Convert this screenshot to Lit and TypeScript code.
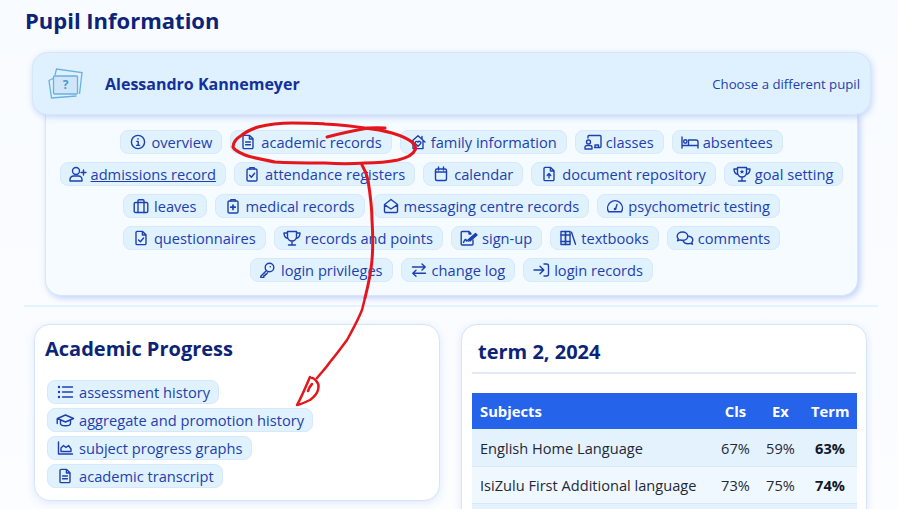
import { LitElement, html, css, svg } from "lit";
import { customElement } from "lit/decorators.js";

const I: Record<string, any> = {
  info: svg`<circle cx="8" cy="8" r="6.6"/><path d="M6.8 7.4H8.2V11.2M6.6 11.4H9.6"/><circle cx="8" cy="4.9" r=".8" fill="currentColor" stroke="none"/>`,
  doc: svg`<path d="M3 2.6a1.2 1.2 0 0 1 1.2-1.2H9.6L13 4.800v8.600a1.200 1.200 0 0 1-1.200 1.200H4.200A1.200 1.200 0 0 1 3 13.400ZM9.400 1.400V5H13M5.600 8H10.400M5.600 10.800H10.400"/>`,
  house: svg`<path d="M1 8 8 1.800 15 8M3 6.400V14.600H13V6.400M12 2.500V5.200"/><path d="M8 12.200 5.300 9.600a1.500 1.500 0 0 1 2.700-1.400 1.500 1.500 0 0 1 2.700 1.400Z"/>`,
  classes: svg`<circle cx="4.500" cy="8" r="2"/><path d="M1 15V13.500a2 2 0 0 1 2-2H6a2 2 0 0 1 2 2V15ZM4 4V2.500a1 1 0 0 1 1-1H16a1 1 0 0 1 1 1V12.500a1 1 0 0 1-1 1H10.500M11 13.500V11h3.500v2.500"/>`,
  bed: svg`<path d="M1 3V14M1 11.500H17M17 14V8a2 2 0 0 0-2-2H7.500V11"/><circle cx="4.300" cy="7.500" r="1.700"/>`,
  userplus: svg`<circle cx="7" cy="5" r="3.500"/><path d="M1 15v-1.500A3.500 3.500 0 0 1 4.500 10h5a3.500 3.500 0 0 1 3.500 3.500V15ZM14.500 4V9M12 6.500H17"/>`,
  clipcheck: svg`<rect x="3" y="3" width="10" height="12" rx="1.300"/><path d="M5.800 3V1.600H10.200V3M5.600 9.300 7.400 11.200 10.600 7.200"/>`,
  cal: svg`<rect x="2.500" y="3" width="11" height="11.500" rx="1.500"/><path d="M5.500 1V4M10.500 1V4M2.500 6H13.500"/>`,
  docup: svg`<path d="M3 2.600a1.200 1.200 0 0 1 1.200-1.200H9.600L13 4.800v8.600a1.200 1.200 0 0 1-1.200 1.200H4.200A1.200 1.200 0 0 1 3 13.400ZM9.400 1.400V5H13M8 12V7.600M6.200 9.400 8 7.600 9.800 9.400"/>`,
  trophystar: svg`<path d="M4.500 1.500H13.500V6.500a4.500 4.500 0 0 1-9 0ZM4.500 3H1C1 6.500 2.500 8 5 8.500M13.500 3H17C17 6.500 15.500 8 13 8.500M9 11V14.500M5.500 15H12.500"/><path d="M9 3.400 9.700 5H11.300L10 6.100 10.500 7.700 9 6.700 7.500 7.700 8 6.100 6.700 5H8.300Z" fill="currentColor" stroke="none"/>`,
  trophy: svg`<path d="M4.500 1.500H13.500V6.500a4.500 4.500 0 0 1-9 0ZM4.500 3H1C1 6.500 2.500 8 5 8.500M13.500 3H17C17 6.500 15.500 8 13 8.500M9 11V14.500M5.500 15H12.500"/>`,
  briefcase: svg`<rect x="1.200" y="4.500" width="13.600" height="10" rx="1.300"/><path d="M5 14.500V2.800a1 1 0 0 1 1-1H10a1 1 0 0 1 1 1V14.500"/>`,
  clipplus: svg`<rect x="3" y="3" width="10" height="12" rx="1.300"/><path d="M5.800 3V1.600H10.200V3" /><path d="M8 7V11.400M5.800 9.200H10.200" stroke-width="1.700"/>`,
  envopen: svg`<path d="M1.500 6.500 8 1.500 14.500 6.500V13.300a1.200 1.200 0 0 1-1.200 1.200H2.700a1.200 1.200 0 0 1-1.200-1.200ZM1.800 6.800 8 11 14.200 6.800"/>`,
  gauge: svg`<path d="M1.600 13.800a7.400 7.400 0 1 1 12.800 0ZM8.600 11 10 6.500"/><circle cx="8" cy="11" r="1.300" fill="currentColor" stroke="none"/>`,
  doccheck: svg`<path d="M3 2.600a1.200 1.200 0 0 1 1.200-1.200H9.600L13 4.800v8.600a1.200 1.200 0 0 1-1.200 1.200H4.200A1.200 1.200 0 0 1 3 13.400ZM9.400 1.400V5H13M5.600 10 7.400 11.800 10.600 8"/>`,
  sign: svg`<path d="M11 3.500 9 1.500H2.200a1 1 0 0 0-1 1V14a1 1 0 0 0 1 1H12a1 1 0 0 0 1-1V10M3.500 12.500C5 9 6 8.500 6.500 11c.8-1 1.300-1 1.800 0M9 1.500V4H11"/><path d="M8.500 9.500 15.500 3.500 17 5 10 11Z" fill="currentColor"/>`,
  books: svg`<rect x="1" y="1.500" width="4.500" height="13" /><rect x="5.500" y="1.500" width="4.500" height="13"/><path d="M1 5H10M1 11.500H10M11.500 2.200 15.500 14.200"/>`,
  comments: svg`<path d="M6.500 2C3.500 2 1.200 3.800 1.200 6.200c0 1 .4 1.900 1.100 2.600L1.500 10.800 4 9.800c.8.300 1.600.5 2.500.5 3 0 5.300-1.800 5.300-4.100S9.500 2 6.500 2Z"/><path d="M12.600 6.200c2.400.3 4.200 1.900 4.200 3.800 0 .9-.4 1.700-1 2.300l.7 1.900-2.300-.9c-.8.300-1.500.4-2.300.4-2.100 0-3.900-1-4.600-2.500"/>`,
  key: svg`<circle cx="10.500" cy="5.500" r="4.300"/><path d="M7.500 8.600 1.800 14.300V15.400H4.800V13.600H6.200V12.200H7.500L8.600 10.700"/><circle cx="11.300" cy="4.700" r=".8" fill="currentColor" stroke="none"/>`,
  swap: svg`<path d="M1.500 5H14M11 2 14.200 5 11 8M14.500 11.300H2M5 8.300 1.800 11.300 5 14.300"/>`,
  login: svg`<path d="M1 8H10.500M7 4.200 10.800 8 7 11.800M11 2H13.500A2 2 0 0 1 15.500 4V12A2 2 0 0 1 13.500 14H11"/>`,
  list: svg`<path d="M5.500 3H15.500M5.500 8H15.500M5.500 13H15.500"/><g fill="currentColor" stroke="none"><circle cx="2" cy="3" r="1.200"/><circle cx="2" cy="8" r="1.200"/><circle cx="2" cy="13" r="1.200"/></g>`,
  grad: svg`<path d="M1.500 6.500 9.500 3 17.500 6.500 9.500 10ZM4.500 8V11.500C4.500 12.800 7 13.700 9.500 13.700S14.500 12.800 14.500 11.500V8M1.200 6.800V11.500"/>`,
  chart: svg`<path d="M1.500 2V14H15.500"/><path d="M4 11.500V8L6.500 5.500 9 7.500 11.500 5.500 14 9V11.500Z"/>`,
};

type Item = [string, string, number?];
const tabs: Item[] = [
  ["info","overview"],["doc","academic records"],["house","family information"],["classes","classes",18],["bed","absentees",18],
  ["userplus","admissions record",18],["clipcheck","attendance registers"],["cal","calendar"],["docup","document repository"],["trophystar","goal setting",18],
  ["briefcase","leaves"],["clipplus","medical records"],["envopen","messaging centre records"],["gauge","psychometric testing"],
  ["doccheck","questionnaires"],["trophy","records and points",18],["sign","sign-up",18],["books","textbooks",17],["comments","comments",18],
  ["key","login privileges",17],["swap","change log"],["login","login records"],
];
const prog: Item[] = [["list","assessment history"],["grad","aggregate and promotion history",19],["chart","subject progress graphs"],["doc","academic transcript"]];
const rows = [["English Home Language","67%","59%","63%"],["IsiZulu First Additional language","73%","75%","74%"],["\u00a0","","",""]];

@customElement("app-root")
export class AppRoot extends LitElement {
  static styles = css`
    :host { display:block; width:898px; height:509px; overflow:hidden; position:relative; box-sizing:border-box;
      font-family:"Open Sans",sans-serif; color:#1e40af;
      background:linear-gradient(180deg,#f8fbff,#fbfdff); }
    * { box-sizing:border-box; }
    h1 { margin:0; font-size:22px; line-height:30px; font-weight:700; color:#0c2478; }
    .page { padding:5px 20px 0 24px; }
    .title { padding-left:1px; }
    .sel { margin:17px 7px 0 8px; height:63px; display:flex; align-items:center; padding:0 10px 0 15px;
      background:#dff1fe; border:1px solid #d6e6fb; border-radius:16px; box-shadow:1px 2px 6px rgba(100,140,240,.35); position:relative; z-index:1; }
    .sel svg { width:36px; height:34px; fill:none; stroke:#69b0e4; stroke-width:1.3; flex:none; }
    .name { margin-left:21px; font-size:16px; font-weight:700; color:#14309a; flex:1; }
    .choose { font-size:13.2px; color:#1e40af; }
    .panel { margin:-1px 20px 0 21px; padding:16px 12px 13px; background:#f5fbff; border:1px solid #d8e5fa; border-top:0;
      border-radius:0 0 16px 16px; box-shadow:2px 2px 6px rgba(100,140,240,.4); display:flex; flex-wrap:wrap; justify-content:center; gap:8px; }
    .chip { height:24px; display:inline-flex; align-items:center; padding:0 9px 0 7px; background:#e0f2fe; border:1px solid #d5e8fc;
      border-radius:8px; font-size:14.65px; line-height:20px; color:#1e40af; white-space:nowrap; }
    .ic { width:20px; height:16px; margin-right:3px; display:flex; justify-content:center; flex:none; }
    .ic svg { height:16px; fill:none; stroke:currentColor; stroke-width:1.400; stroke-linecap:round; stroke-linejoin:round; overflow:visible; }
    .u { text-decoration:underline; }
    hr { margin:9px 0 0; border:0; height:2px; background:#e6f2fe; width:854px; }
    .cols { display:grid; grid-template-columns:406px 406px; column-gap:21px; margin:17px 0 0 10px; }
    .card { background:#fff; border:1px solid #d6e4fa; border-radius:16px; box-shadow:0 2px 8px rgba(100,140,240,.18); padding:10px; }
    .left { height:177px; }
    h2 { margin:0; font-size:20px; line-height:28px; font-weight:700; color:#0c2478; }
    .stack { display:flex; flex-direction:column; align-items:flex-start; gap:4px; margin:17px 0 0 2px; }
    .stack .ic { margin-right:4px; }
    .stack .chip { padding-right:8px; }
    .right { height:240px; }
    .right h2 { padding:3px 6px 7px; border-bottom:2px solid #e2eaf8; height:39px; }
    table { border-collapse:collapse; table-layout:fixed; width:385px; margin-top:19px; font-size:14.600px; color:#1f2937; }
    th { background:#2563eb; color:#fff; height:36px; font-size:14.800px; font-weight:700; padding:0 8px; text-align:center; }
    td { height:37px; padding:1px 8px 0; text-align:center; border-bottom:1px solid #d8e8f8; white-space:nowrap; }
    .l { text-align:left; }
    tbody tr:nth-child(odd) { background:#e4f2fe; }
    tbody tr:nth-child(even) { background:#f0f8ff; }
    b { font-weight:700; color:#111827; }
    .ink { position:absolute; left:0; top:0; width:898px; height:509px; pointer-events:none; fill:none; stroke:#e4161c; stroke-linecap:round; stroke-linejoin:round; }
  `;
  chip(i: Item, under = false) {
    const w = i[2] ?? 16;
    return html`<span class="chip"><span class="ic"><svg viewBox="0 0 ${w} 16" width=${w}>${I[i[0]]}</svg></span><span class=${under ? "u" : ""}>${i[1]}</span></span>`;
  }
  render() {
    return html`<div class="page">
      <div class="title"><h1>Pupil Information</h1></div>
      <div class="sel">
        <svg viewBox="0 0 36 34"><path d="M7 8 8.500 2 34 5.500 31.500 27M5 11.500 1 13.500 3.500 31 28.500 29"/><rect x="5.500" y="9" width="24" height="18" rx="1" fill="#cfe6f8"/><text x="17.500" y="22" font-size="12" font-weight="700" text-anchor="middle" fill="#4f97d1" stroke="none">?</text></svg>
        <span class="name">Alessandro Kannemeyer</span>
        <span class="choose">Choose a different pupil</span>
      </div>
      <div class="panel">${tabs.map((t) => this.chip(t, t[1] === "admissions record"))}</div>
      <hr />
      <div class="cols">
        <div class="card left"><h2>Academic Progress</h2><div class="stack">${prog.map((p) => this.chip(p))}</div></div>
        <div class="card right"><h2>term 2, 2024</h2>
          <table><colgroup><col style="width:241px"/><col style="width:45px"/><col style="width:45px"/><col style="width:54px"/></colgroup>
            <thead><tr><th class="l">Subjects</th><th>Cls</th><th>Ex</th><th>Term</th></tr></thead>
            <tbody>${rows.map((r) => html`<tr><td class="l">${r[0]}</td><td>${r[1]}</td><td>${r[2]}</td><td><b>${r[3]}</b></td></tr>`)}</tbody>
          </table>
        </div>
      </div>
    </div>
    <svg class="ink" viewBox="0 0 898 509">
      <path stroke-width="3" d="M327 137C338 134 352 131 368 128C375 127.500 380 127.500 385 128"/>
      <path stroke-width="3.200" d="M258 127C270 124 282 123 292 123C305 123 318 123 325 124C340 125 352 126 365 128C375 129 385 131 392 133C402 136 408 139 412 142C415 145 416 148 415 150C413 155 406 158 398 160C388 162 377 163 365 163C352 164 338 164 325 163C308 163 290 163 275 162C265 160 253 158 245 155C238 152 234 150 233 147C233 142 237 138 242 135C247 131 252 129 258 127Z"/>
      <path stroke-width="3" d="M362 165C365 170 367 175 368 180C370 193 372 206 372 220C373 235 373 248 372 260C371 273 368 286 365 298"/>
      <path stroke-width="2.500" d="M365 298C364 302 363 306 362 310C358 320 352 331 347 340C341 348 336 355 330 362C326 368 321 373 317 378"/>
      <path stroke-width="2.500" d="M310 377C306 386 302 396 297 405C302 404 306 402 310 400C314 397 317 394 318 390C319 386 318 383 317 382C315 379 313 378 312 378M312 384C310 386 309 388 308 391"/>
    </svg>`;
  }
}
